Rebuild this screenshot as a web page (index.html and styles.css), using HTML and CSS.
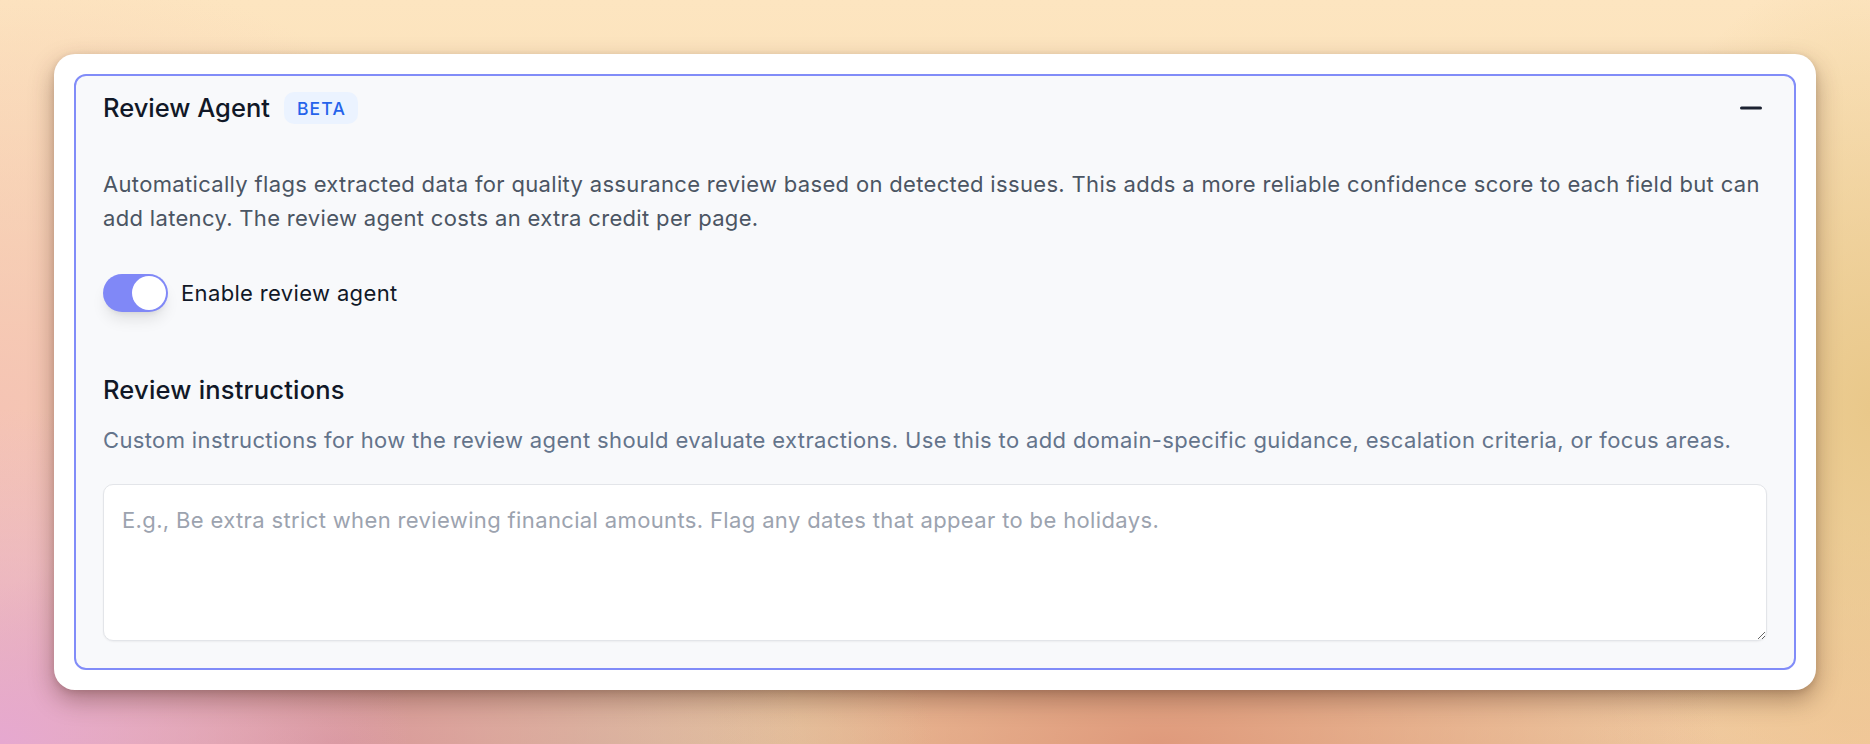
FILE: index.html
```html
<!DOCTYPE html>
<html lang="en">
<head>
    <meta charset="UTF-8">
    <meta name="viewport" content="width=device-width, initial-scale=1.0">
    <title>Review Agent</title>
    <link rel="stylesheet" href="styles.css">
</head>
<body>
    <div class="card">
        <section class="panel">
            <div class="panel-header">
                <div class="panel-title">
                    <h2>Review Agent</h2>
                    <span class="badge">BETA</span>
                </div>
                <button class="collapse-btn" aria-label="Collapse">
                    <svg width="22" height="22" viewBox="0 0 22 22" fill="none">
                        <path d="M1.5 11H20.5" stroke="#1c2231" stroke-width="3" stroke-linecap="round"/>
                    </svg>
                </button>
            </div>

            <p class="description">Automatically flags extracted data for quality assurance review based on detected issues. This adds a more reliable confidence score to each field but can add latency. The review agent costs an extra credit per page.</p>

            <label class="toggle-row">
                <span class="toggle on"><span class="knob"></span></span>
                <span class="toggle-label">Enable review agent</span>
            </label>

            <h3 class="section-title">Review instructions</h3>
            <p class="helper">Custom instructions for how the review agent should evaluate extractions. Use this to add domain-specific guidance, escalation criteria, or focus areas.</p>

            <textarea class="instructions" placeholder="E.g., Be extra strict when reviewing financial amounts. Flag any dates that appear to be holidays."></textarea>
        </section>
    </div>
</body>
</html>
```

FILE: styles.css
```css
* {
    box-sizing: border-box;
}
html, body {
    height: 100%;
}
body {
    margin: 0;
    padding: 54px;
    font-family: Inter, "Noto Sans", sans-serif;
    color: #111827;
    background-color: #f1cfa4;
    background-image:
        radial-gradient(ellipse 22% 45% at 0% 100%, #e6a8d0 0%, rgba(230, 168, 208, 0) 100%),
        radial-gradient(ellipse 25% 30% at 18% 100%, #d8979a 0%, rgba(216, 151, 154, 0) 100%),
        radial-gradient(ellipse 18% 25% at 32% 100%, #dcc3a2 0%, rgba(220, 195, 162, 0) 100%),
        radial-gradient(ellipse 30% 30% at 62% 100%, #df9a7c 0%, rgba(223, 154, 124, 0) 100%),
        radial-gradient(ellipse 15% 60% at 100% 55%, #e9c88a 0%, rgba(233, 200, 138, 0) 100%),
        radial-gradient(ellipse 15% 30% at 100% 100%, #f3c79c 0%, rgba(243, 199, 156, 0) 100%),
        radial-gradient(ellipse 30% 60% at 0% 55%, #f5c4b4 0%, rgba(245, 196, 180, 0) 100%),
        linear-gradient(180deg, #fde5c0 0%, #f7dcb2 50%, #eec9a0 100%);
}
.card {
    background: #ffffff;
    border-radius: 21px;
    padding: 20px;
    box-shadow: 0 10px 24px rgba(70, 35, 20, 0.38), 0 2px 6px rgba(70, 35, 20, 0.15);
}
.panel {
    background: #f8f9fb;
    border: 2px solid #818cf8;
    border-radius: 12px;
    padding: 16px 27px 27px;
}
.panel-header {
    display: flex;
    align-items: center;
    justify-content: space-between;
    height: 32px;
}
.panel-title {
    display: flex;
    align-items: center;
    gap: 14px;
}
.panel-title h2 {
    margin: 0;
    font-size: 25.5px;
    font-weight: 500;
    line-height: 32px;
    color: #111827;
}
.badge {
    display: inline-flex;
    align-items: center;
    height: 32px;
    padding: 0 12px 0 13px;
    border-radius: 10px;
    background: #ebf3ff;
    color: #2563eb;
    font-size: 17.5px;
    font-weight: 500;
    letter-spacing: 1.2px;
}
.collapse-btn {
    display: flex;
    padding: 0;
    margin-right: 5px;
    border: none;
    background: none;
    cursor: pointer;
}
.description {
    margin: 43px 0 0;
    font-size: 22px;
    letter-spacing: 0.33px;
    line-height: 34px;
    color: #4b5563;
}
.toggle-row {
    display: flex;
    align-items: center;
    gap: 13px;
    margin-top: 39px;
    cursor: pointer;
}
.toggle {
    position: relative;
    width: 65px;
    height: 38px;
    border-radius: 19px;
    background: #d1d5db;
    box-shadow: 0 10px 15px -3px rgba(0, 0, 0, 0.1), 0 4px 6px -4px rgba(0, 0, 0, 0.1);
}
.toggle.on {
    background: #8088f7;
}
.toggle .knob {
    position: absolute;
    top: 2px;
    left: 2px;
    width: 34px;
    height: 34px;
    border-radius: 50%;
    background: #ffffff;
}
.toggle.on .knob {
    left: 29px;
}
.toggle-label {
    font-size: 22px;
    letter-spacing: 0.35px;
    color: #111827;
}
.section-title {
    margin: 61px 0 0;
    font-size: 25.5px;
    font-weight: 500;
    letter-spacing: 0.2px;
    line-height: 34px;
    color: #111827;
}
.helper {
    margin: 16px 0 0;
    font-size: 22px;
    letter-spacing: 0.36px;
    line-height: 34px;
    color: #64748b;
}
.instructions {
    display: block;
    width: 100%;
    height: 157px;
    margin-top: 27px;
    padding: 18px;
    border: 1px solid #e3e5e9;
    border-radius: 10px;
    background: #ffffff;
    box-shadow: 0 1px 2px rgba(0, 0, 0, 0.05);
    font-family: inherit;
    font-size: 22px;
    letter-spacing: 0.36px;
    line-height: 34px;
    color: #111827;
    resize: vertical;
    outline: none;
}
.instructions::placeholder {
    color: #9ca3af;
}
```
